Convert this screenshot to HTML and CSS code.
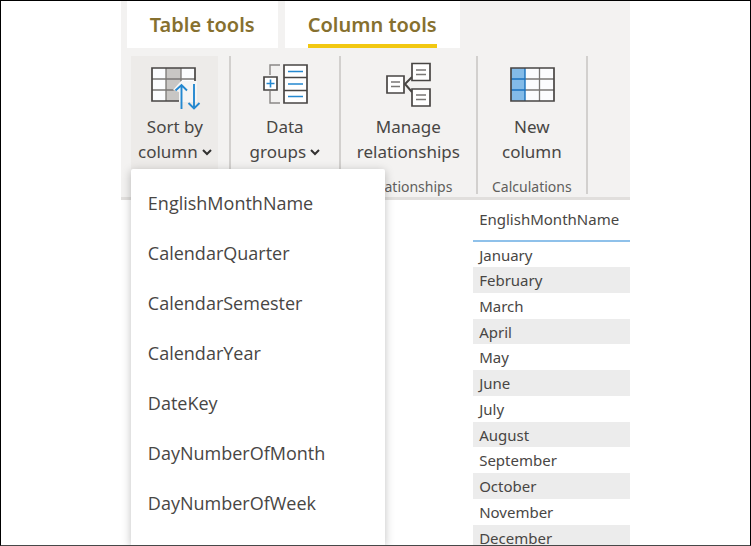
FILE: index.html
```
<!DOCTYPE html>
<html lang="en">
<head>
<meta charset="utf-8">
<title>Column tools</title>
<link rel="stylesheet" href="styles.css">
</head>
<body>
<div class="frame">
<main class="app">
  <nav class="tabs">
    <a class="tab" href="#table"><span class="tab-text">Table tools</span></a>
    <a class="tab active" href="#column"><span class="tab-text">Column tools</span></a>
  </nav>
  <div class="ribbon">
    <section class="group">
      <button class="tool pressed" aria-haspopup="menu" aria-expanded="true">
        <svg class="icon" width="54" height="48" viewBox="2 0 54 48" aria-hidden="true">
          <path fill="#fbfcfe" d="M6 8h43v33H6z"/>
          <path fill="#c8c6c4" d="M20 8h15v33H20z"/>
          <path fill="none" stroke="#797775" stroke-width="1.3" d="M20 8v33M35 8v33M6 19h43M6 30h43"/>
          <path fill="none" stroke="#484644" stroke-width="1.7" d="M6 8h43v33H6z"/>
          <path fill="#f5f5f5" d="M27 30l8-9h16v21H33V32z"/>
          <path fill="none" stroke="#2488d0" stroke-width="1.9" d="M35.500 49V25M29.500 30.500L35.500 25l5.500 5.500M48 24v24M42.500 43l5.500 5.500L53.500 43"/>
        </svg>
        <span>Sort by</span>
        <span>column<svg class="chevron" width="10" height="7" viewBox="0 0 10 7" aria-hidden="true"><path d="M1 1l4 4 4-4"/></svg></span>
      </button>
    </section>
    <section class="group">
      <button class="tool" aria-haspopup="menu">
        <svg class="icon" width="54" height="48" viewBox="4 0 54 48" aria-hidden="true">
          <path fill="none" stroke="#8a8886" stroke-width="1.4" d="M16 15V5h10M16 31v12h10"/>
          <path fill="#fff" stroke="#484644" stroke-width="1.7" d="M10 17h13v13H10zM30 5h23v38H30z"/>
          <path fill="none" stroke="#484644" stroke-width="1.5" d="M30 17.500h23M30 30.500h23"/>
          <path fill="none" stroke="#2488d0" stroke-width="1.6" d="M12.500 23.500h8M16.500 19.500v8M34 11.500h15M34 24h15M34 36.500h15"/>
        </svg>
        <span>Data</span>
        <span>groups<svg class="chevron" width="10" height="7" viewBox="0 0 10 7" aria-hidden="true"><path d="M1 1l4 4 4-4"/></svg></span>
      </button>
    </section>
    <section class="group wide">
      <button class="tool">
        <svg class="icon" width="54" height="48" viewBox="0 0 54 48" aria-hidden="true">
          <path fill="none" stroke="#484644" stroke-width="2" d="M31 17l-7 7 7 8"/>
          <path fill="#fff" stroke="#484644" stroke-width="1.7" d="M6 16h17v17H6zM31 3.500h18v17H31zM31 29h18v17H31z"/>
          <path fill="none" stroke="#797775" stroke-width="1.4" d="M10 22h9M10 26.500h9M35 10h10M35 14.500h10M35 35h10M35 39.500h10"/>
        </svg>
        <span>Manage</span>
        <span>relationships</span>
      </button>
      <div class="caption">Relationships</div>
    </section>
    <section class="group">
      <button class="tool">
        <svg class="icon" width="54" height="48" viewBox="0 0 54 48" aria-hidden="true">
          <path fill="#fbfcfe" d="M6 8h43v33H6z"/>
          <path fill="#83bbe8" d="M6 8h14v33H6z"/>
          <path fill="none" stroke="#797775" stroke-width="1.3" d="M34.500 8v33M20 19h29M20 30h29"/>
          <path fill="none" stroke="#1b72bd" stroke-width="1.4" d="M20 8v33M6 19h14M6 30h14"/>
          <path fill="none" stroke="#484644" stroke-width="1.7" d="M6 8h43v33H6z"/>
        </svg>
        <span>New</span>
        <span>column</span>
      </button>
      <div class="caption">Calculations</div>
    </section>
  </div>
  <div class="content">
    <table class="months">
      <thead><tr><th scope="col">EnglishMonthName</th></tr></thead>
      <tbody>
        <tr><td>January</td></tr>
        <tr><td>February</td></tr>
        <tr><td>March</td></tr>
        <tr><td>April</td></tr>
        <tr><td>May</td></tr>
        <tr><td>June</td></tr>
        <tr><td>July</td></tr>
        <tr><td>August</td></tr>
        <tr><td>September</td></tr>
        <tr><td>October</td></tr>
        <tr><td>November</td></tr>
        <tr><td>December</td></tr>
      </tbody>
    </table>
  </div>
  <div class="menu" role="menu">
    <button class="item" role="menuitem">EnglishMonthName</button>
    <button class="item" role="menuitem">CalendarQuarter</button>
    <button class="item" role="menuitem">CalendarSemester</button>
    <button class="item" role="menuitem">CalendarYear</button>
    <button class="item" role="menuitem">DateKey</button>
    <button class="item" role="menuitem">DayNumberOfMonth</button>
    <button class="item" role="menuitem">DayNumberOfWeek</button>
  </div>
</main>
</div>
</body>
</html>
```
FILE: styles.css
```
* { box-sizing: border-box; }

body {
  margin: 0;
  background: #fff;
  color: #484644;
  font-family: "Noto Sans", "Open Sans", sans-serif;
  font-size: 17px;
}

button {
  border: 0;
  background: none;
  color: inherit;
  font: inherit;
}

.frame {
  height: 100vh;
  border: 1px solid #000;
  border-bottom-color: #484848;
  overflow: hidden;
}

.app {
  position: relative;
  width: 68%;
  min-width: 509px;
  height: 100%;
  margin: 0 auto;
  overflow: hidden;
}

.tabs {
  display: flex;
  gap: 7px;
  padding-left: 6px;
  background: #f3f2f1;
}

.tab {
  display: flex;
  padding: 0 23px;
  background: #fff;
  color: #86702f;
  font-size: 20px;
  font-weight: 600;
  line-height: 48px;
  text-decoration: none;
}

.tab-text {
  height: 47px;
  border-bottom: 4px solid transparent;
}

.active .tab-text { border-bottom-color: #f2c811; }

.ribbon {
  display: flex;
  height: 152px;
  padding: 8px 0 3px;
  border-bottom: 3px solid #e1dfdd;
  background: #f3f2f1;
}

.group {
  display: flex;
  flex-direction: column;
  align-items: center;
  width: 110px;
  border-right: 2px solid #d2d0ce;
}

.wide { width: 137px; }

.tool {
  display: flex;
  flex-direction: column;
  align-items: center;
  padding: 4px 0 0;
  line-height: 25px;
  white-space: nowrap;
}

.pressed {
  width: 87px;
  height: 100%;
  background: #edebe9;
}

.icon {
  display: block;
  margin-bottom: 6px;
  overflow: visible;
}

.chevron {
  margin: 0 0 2px 4px;
  fill: none;
  stroke: #323130;
  stroke-width: 2;
}

.caption {
  margin-top: auto;
  color: #605e5c;
  font-size: 14px;
  line-height: 14px;
}

.content {
  display: flex;
  justify-content: flex-end;
}

.months {
  width: 157px;
  border-collapse: collapse;
  font-size: 15px;
  line-height: 20px;
}

.months th {
  height: 41px;
  padding: 0 6px 2px;
  border-bottom: 2px solid #8fc1ea;
  font-weight: 400;
  text-align: left;
}

.months td {
  height: 26px;
  padding: 2px 6px;
}

.months tr:nth-child(4n) td { height: 25px; }

.months tbody tr:nth-child(even) { background: #ececec; }

.menu {
  position: absolute;
  top: 168px;
  bottom: 0;
  left: 10px;
  width: 254px;
  padding-top: 9px;
  border-radius: 2px 2px 0 0;
  background: #fff;
  box-shadow: 0 2px 10px rgba(0, 0, 0, 0.25);
}

.item {
  display: block;
  width: 100%;
  height: 50px;
  padding: 0 17px;
  font-family: "Open Sans", "Noto Sans", sans-serif;
  font-size: 18px;
  text-align: left;
}
```
